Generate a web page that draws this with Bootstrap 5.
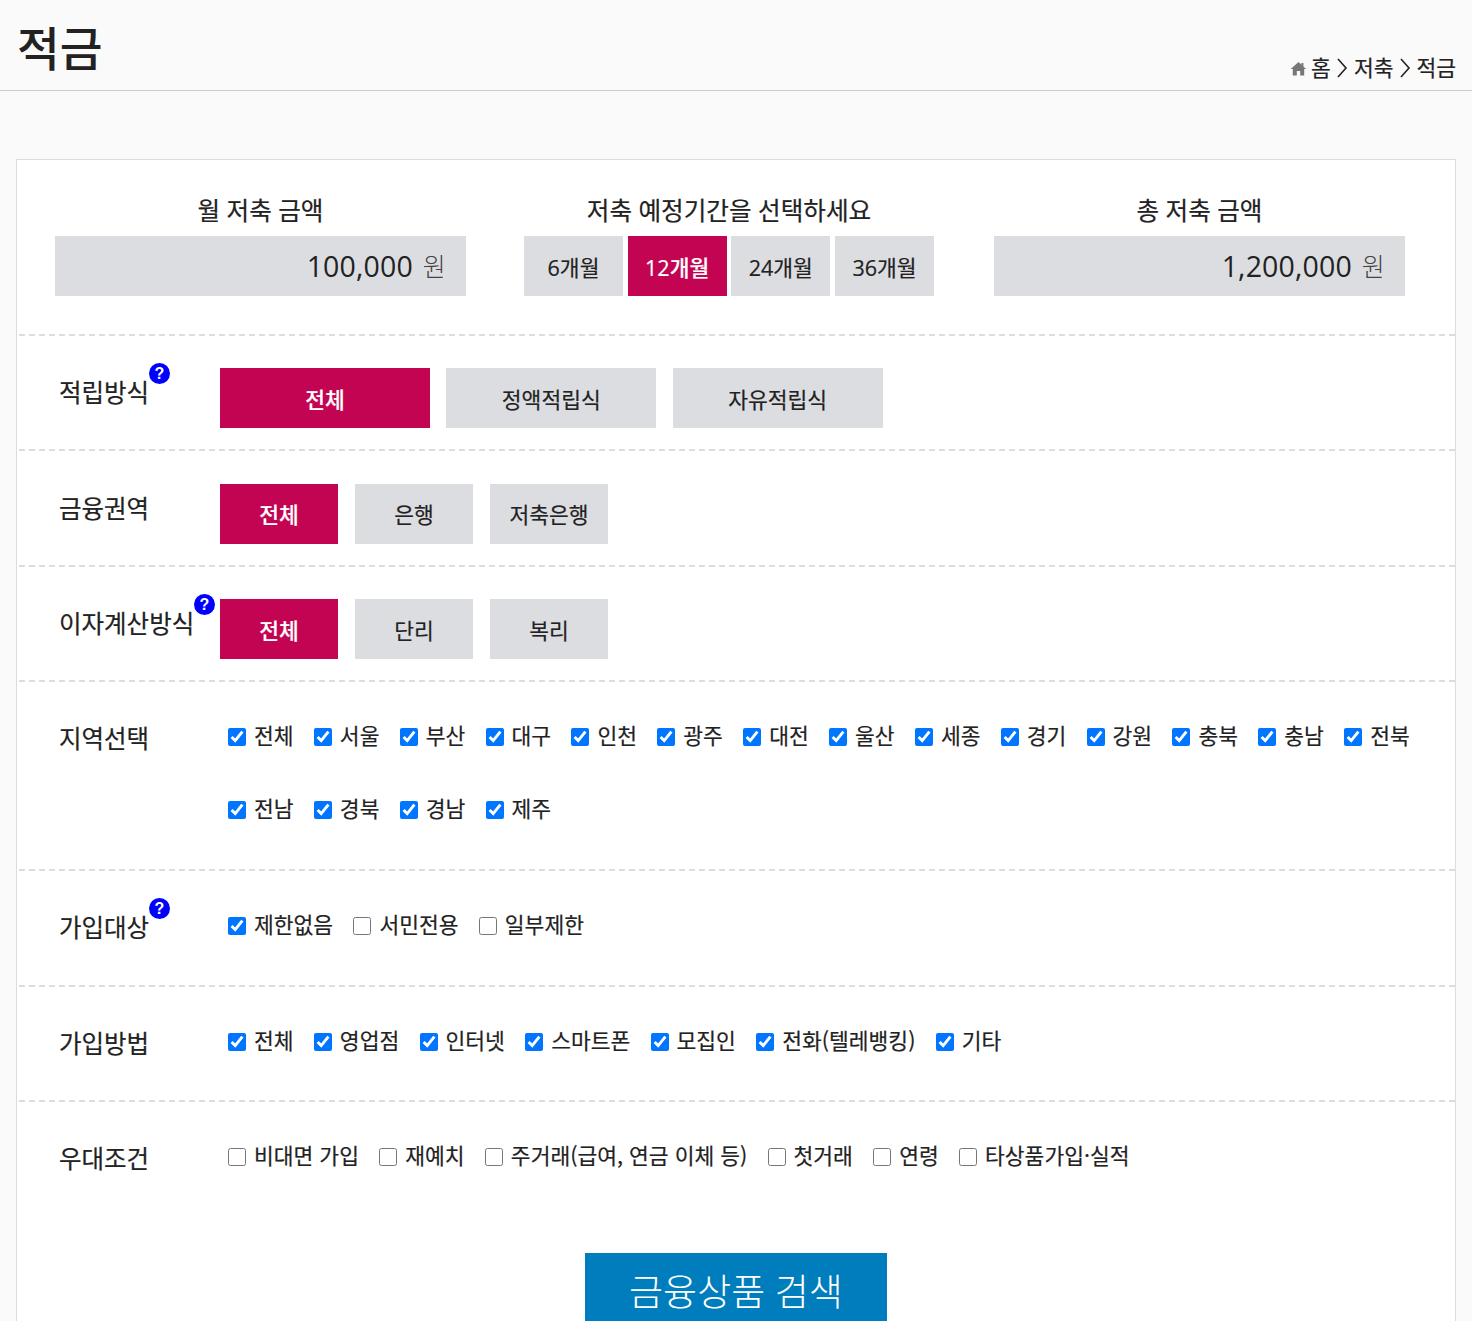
<!DOCTYPE html>
<html lang="ko">
<head>
    <meta charset="UTF-8">
    <meta name="viewport" content="width=device-width, initial-scale=1.0">
    <link href="https://cdn.jsdelivr.net/npm/bootstrap@5.3.3/dist/css/bootstrap.min.css" rel="stylesheet">
    <script src="https://cdn.jsdelivr.net/npm/bootstrap@5.3.3/dist/js/bootstrap.bundle.min.js"></script>
    <title>적금</title>
    <style>
        html, body { height: 1321px; overflow: hidden; }
        body { background: #fafafa; color: #222; font-family: "Open Sans", "Noto Sans CJK KR", sans-serif; }
        .page-head { height: 91px; border-bottom: 1px solid #ccc; padding: 0 16px 0 17px; }
        .page-title { font-size: 46.5px; font-weight: 500; margin: 0; line-height: 1; padding-top: 25px; }
        .crumbs { font-size: 21.5px; padding-top: 46px; line-height: 30px; gap: 5.5px; -webkit-text-stroke: .2px; }
        .crumbs svg { display: block; }
        .crumbs .home-icon { margin-right: -1px; }
        .filter-box { margin: 68px 16px 0; background: #fff; border: 1px solid #ddd; height: 1200px; }
        .top-area { height: 174px; padding: 25px 0 0 38px; gap: 58px; }
        .top-col { width: 411px; }
        .top-col.months { width: 410px; margin-right: 2px; }
        .top-label { font-size: 24.6px; line-height: 51px; text-align: center; -webkit-text-stroke: .2px; }
        .amount { height: 60px; background: #dcdde1; font-size: 28.5px; letter-spacing: .15px; padding-right: 20px; }
        .amount span { color: #444; margin: 2px 0 0 10px; font-size: 25px; font-weight: 300; }
        .month-btn { width: 99px; height: 60px; background: #dcdde1; font-size: 21.5px; padding-top: 4px; -webkit-text-stroke: .2px; }
        .month-btn.on, .opt-btn.on { background: #c30452; color: #fff; font-weight: 500; }
        .filter-row { height: 115.4px; border-top: 2px dashed #ddd; margin-left: 2px; padding: 32.2px 0 0 40px; }
        .filter-row.tall { height: 189px; }
        .row-name { width: 161px; font-size: 24.5px; line-height: 49px; flex-shrink: 0; position: relative; -webkit-text-stroke: .2px; }
        .row-name i { position: absolute; top: -5px; width: 21px; height: 21px; border-radius: 50%; background: #00f; color: #fff; font: bold 16px/21px "Liberation Sans", sans-serif; text-align: center; -webkit-text-stroke: 0; }
        .opt-btn { height: 60px; width: 118px; background: #dcdde1; font-size: 21.5px; padding-top: 4px; -webkit-text-stroke: .2px; }
        .opt-btn.wide { width: 210px; }
        .check-list { padding: 1px 0 0 8px; column-gap: 20.3px; row-gap: 33px; }
        .check-item { font-family: "Noto Sans CJK KR", sans-serif; font-size: 21.5px; line-height: 40px; gap: 8px; -webkit-text-stroke: .2px; }
        .check-item input { width: 18px; height: 18px; margin: 4px 0 0; }
        .search-btn { width: 302px; height: 76px; margin: 38px auto 0; background: #007dbc; color: #fff; font-size: 37px; font-weight: 300; }
    </style>
</head>
<body>
    <header class="page-head d-flex justify-content-between">
        <h1 class="page-title">적금</h1>
        <div class="crumbs d-flex align-items-center">
            <svg class="home-icon" width="17" height="15" viewBox="0 0 17 15"><path fill="#777" d="M8.500 1 .8 8h2v6.500h4V10h3.400v4.500h4V8h1.900l-2.700-2.500V2h-2v1.700z"/></svg>
            <span>홈</span>
            <svg width="12" height="20" viewBox="0 0 12 20"><path fill="none" stroke="#222" stroke-width="1.6" d="M2 1l8 9-8 9"/></svg>
            <span>저축</span>
            <svg width="12" height="20" viewBox="0 0 12 20"><path fill="none" stroke="#222" stroke-width="1.6" d="M2 1l8 9-8 9"/></svg>
            <span>적금</span>
        </div>
    </header>

    <main class="filter-box">
        <section class="top-area d-flex">
            <div class="top-col">
                <div class="top-label">월 저축 금액</div>
                <div class="amount d-flex align-items-center justify-content-end">100,000 <span>원</span></div>
            </div>
            <div class="top-col months">
                <div class="top-label">저축 예정기간을 선택하세요</div>
                <div class="d-flex justify-content-between">
                    <div class="month-btn d-flex align-items-center justify-content-center">6개월</div>
                    <div class="month-btn on d-flex align-items-center justify-content-center">12개월</div>
                    <div class="month-btn d-flex align-items-center justify-content-center">24개월</div>
                    <div class="month-btn d-flex align-items-center justify-content-center">36개월</div>
                </div>
            </div>
            <div class="top-col">
                <div class="top-label">총 저축 금액</div>
                <div class="amount d-flex align-items-center justify-content-end">1,200,000 <span>원</span></div>
            </div>
        </section>

        <section class="filter-row d-flex">
            <div class="row-name">적립방식<i style="left: 90px">?</i></div>
            <div class="d-flex" style="gap: 16.3px">
                <div class="opt-btn wide on d-flex align-items-center justify-content-center">전체</div>
                <div class="opt-btn wide d-flex align-items-center justify-content-center">정액적립식</div>
                <div class="opt-btn wide d-flex align-items-center justify-content-center">자유적립식</div>
            </div>
        </section>

        <section class="filter-row d-flex">
            <div class="row-name">금융권역</div>
            <div class="d-flex" style="gap: 17px">
                <div class="opt-btn on d-flex align-items-center justify-content-center">전체</div>
                <div class="opt-btn d-flex align-items-center justify-content-center">은행</div>
                <div class="opt-btn d-flex align-items-center justify-content-center">저축은행</div>
            </div>
        </section>

        <section class="filter-row d-flex">
            <div class="row-name">이자계산방식<i style="left: 135px">?</i></div>
            <div class="d-flex" style="gap: 17px">
                <div class="opt-btn on d-flex align-items-center justify-content-center">전체</div>
                <div class="opt-btn d-flex align-items-center justify-content-center">단리</div>
                <div class="opt-btn d-flex align-items-center justify-content-center">복리</div>
            </div>
        </section>

        <section class="filter-row tall d-flex">
            <div class="row-name">지역선택</div>
            <div class="check-list d-flex flex-wrap align-content-start" id="regions"></div>
        </section>

        <section class="filter-row d-flex">
            <div class="row-name">가입대상<i style="left: 90px">?</i></div>
            <div class="check-list d-flex flex-wrap align-content-start" id="targets"></div>
        </section>

        <section class="filter-row d-flex">
            <div class="row-name">가입방법</div>
            <div class="check-list d-flex flex-wrap align-content-start" id="methods"></div>
        </section>

        <section class="filter-row d-flex">
            <div class="row-name">우대조건</div>
            <div class="check-list d-flex flex-wrap align-content-start" id="perks"></div>
        </section>

        <div class="search-btn d-flex align-items-center justify-content-center">금융상품 검색</div>
    </main>

    <script>
        function addChecks(id, names, checked) {
            document.getElementById(id).innerHTML = names.map(function (name) {
                return '<label class="check-item d-flex align-items-center"><input type="checkbox"' + (checked(name) ? ' checked' : '') + '>' + name + '</label>';
            }).join('');
        }
        var all = function () { return true; };
        addChecks('regions', ['전체','서울','부산','대구','인천','광주','대전','울산','세종','경기','강원','충북','충남','전북','전남','경북','경남','제주'], all);
        addChecks('targets', ['제한없음','서민전용','일부제한'], function (n) { return n === '제한없음'; });
        addChecks('methods', ['전체','영업점','인터넷','스마트폰','모집인','전화(텔레뱅킹)','기타'], all);
        addChecks('perks', ['비대면 가입','재예치','주거래(급여, 연금 이체 등)','첫거래','연령','타상품가입·실적'], function () { return false; });
    </script>
</body>
</html>
